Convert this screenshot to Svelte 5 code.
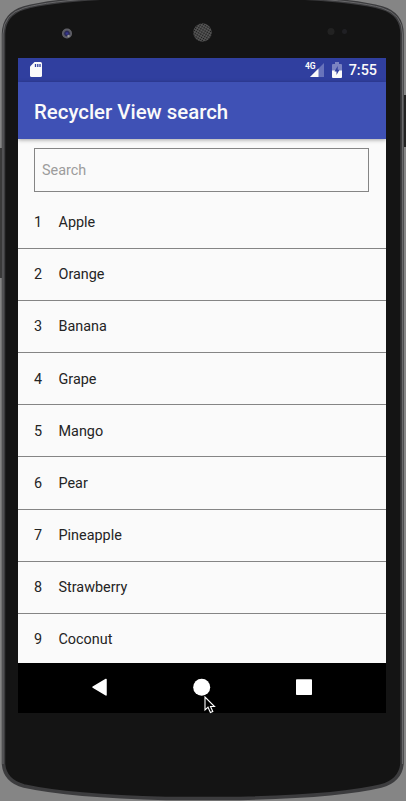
<script>
  const fruits = ['Apple', 'Orange', 'Banana', 'Grape', 'Mango', 'Pear', 'Pineapple', 'Strawberry', 'Coconut'];
</script>

<div class="device">
  <svg class="shell" viewBox="0 0 406 801" aria-hidden="true">
    <defs>
      <pattern id="grille" width="2.400" height="2.400" patternUnits="userSpaceOnUse" patternTransform="rotate(30)">
        <rect width="2.400" height="2.400" fill="#5c5c5c" />
        <circle cx="1.200" cy="1.200" r=".85" fill="#181818" />
      </pattern>
      <radialGradient id="lens">
        <stop offset="0" stop-color="#3c3ca0" />
        <stop offset=".45" stop-color="#252550" />
        <stop offset=".65" stop-color="#555560" />
        <stop offset="1" stop-color="#66666c" />
      </radialGradient>
    </defs>
    <rect width="406" height="801" fill="#858585" />
    <rect x="0" y="148" width="2" height="130" fill="#3a3a3a" />
    <rect x="404" y="95" width="2" height="52" fill="#222" />
    <path
      d="M3.500 34 Q4 14 24 8 Q48 1 105 -2 H300 Q358 1 382 8 Q402 14 402 34 V764 Q400 781 381 786 Q340 796 240 798.500 H166 Q70 796 24 786 Q5 781 3.500 764 Z"
      fill="#141414" stroke="#3c3c3e" stroke-width="3.500" />
    <path
      d="M3 34 Q3.500 14 24 8 Q48 1 105 -2 H300 Q358 1 382 8 Q402.500 14 402.500 34 V764"
      fill="none" stroke="#68686a" stroke-width="1" />
    <path d="M3 34V764" stroke="#68686a" />
    <circle cx="67" cy="33.500" r="5" fill="url(#lens)" />
    <circle cx="68.500" cy="36" r="1.200" fill="#999" />
    <circle cx="202.500" cy="32.500" r="9.300" fill="url(#grille)" />
    <circle cx="331" cy="31.500" r="3.500" fill="#222" />
    <circle cx="344.500" cy="31.500" r="2.500" fill="#202024" />
  </svg>

  <div class="screen">
    <div class="status">
      <svg class="sd" width="12" height="15" viewBox="0 0 12 15" aria-hidden="true">
        <path d="M4.500 0H10.500Q12 0 12 1.500V13.500Q12 15 10.500 15H1.500Q0 15 0 13.500V4.500Z" fill="#fafafa" />
        <path d="M5.500 2V5M7.800 2V5M10 2V5" stroke="#303f9f" stroke-width="1.300" />
      </svg>
      <span class="net">4G</span>
      <svg class="signal" width="14" height="14" viewBox="0 0 14 14" aria-hidden="true">
        <path d="M14 0V14H0Z" fill="#6873bb" />
        <path d="M8.500 5.500V14H0Z" fill="#fafafa" />
      </svg>
      <svg class="battery" width="10" height="16" viewBox="0 0 10 16" aria-hidden="true">
        <path d="M3 0H7V2H9Q10 2 10 3V9H0V3Q0 2 1 2H3Z" fill="#7b84c2" />
        <path d="M0 8.500H10V15Q10 16 9 16H1Q0 16 0 15Z" fill="#fafafa" />
        <path d="M5.700 4L2.500 9.500H4.500V13L7.500 7.700H5.700Z" fill="#303f9f" />
      </svg>
      <time>7:55</time>
    </div>
    <header><h1>Recycler View search</h1></header>
    <main>
      <input type="text" placeholder="Search" aria-label="Search" />
      <ul>
        {#each fruits as fruit, i}
          <li><span class="num">{i + 1}</span><span>{fruit}</span></li>
        {/each}
      </ul>
    </main>
    <nav>
      <svg width="368" height="50" viewBox="0 0 368 50" aria-hidden="true">
        <path d="M75 24.200L88 16.500V31.900Z" fill="#fff" stroke="#fff" stroke-width="1.500" stroke-linejoin="round" />
        <circle cx="183.700" cy="24.200" r="8.500" fill="#fff" />
        <rect x="278" y="16.200" width="16" height="15.800" rx=".8" fill="#fff" />
      </svg>
    </nav>
  </div>

  <svg class="pointer" width="12" height="18" viewBox="0 0 12 18" aria-hidden="true">
    <path d="M1 1V14L4 11.200L6.400 16.500L8.800 15.400L6.500 10.500H10.500Z" fill="#000" stroke="#fff" stroke-width="1.100" />
  </svg>
</div>

<style>
  .device {
    position: relative;
    width: 406px;
    height: 801px;
    padding: 58px 20px 0 18px;
    box-sizing: border-box;
    overflow: hidden;
    font-family: Roboto, sans-serif;
  }
  .shell {
    position: absolute;
    inset: 0;
    width: 406px;
    height: 801px;
  }
  .screen {
    position: relative;
    display: flex;
    flex-direction: column;
    width: 368px;
    height: 655px;
    background: #fafafa;
    overflow: hidden;
  }
  .status {
    flex: none;
    display: flex;
    height: 24px;
    padding: 0 9px 0 12px;
    background: #303f9f;
    color: #fafafa;
  }
  .sd {
    margin-top: 4px;
  }
  .net {
    margin: 4px 0 0 auto;
    font-size: 8.5px;
    line-height: 9px;
    font-weight: 700;
  }
  .signal {
    margin: 5px 0 0 -6px;
  }
  .battery {
    margin: 4px 0 0 8px;
  }
  time {
    margin-left: 7px;
    font-size: 14.4px;
    line-height: 25px;
    font-weight: 500;
  }
  header {
    position: relative;
    flex: none;
    display: flex;
    align-items: center;
    height: 57px;
    padding: 0 16px;
    background: #3f51b5;
    box-shadow: 0 1px 4px rgba(0, 0, 0, 0.35);
  }
  h1 {
    margin: 2px 0 0;
    font-size: 20.4px;
    line-height: 24px;
    font-weight: 500;
    color: #fafafa;
    white-space: nowrap;
  }
  main {
    flex: 1;
    min-height: 0;
    overflow: hidden;
    padding-top: 9px;
  }
  input {
    display: block;
    box-sizing: border-box;
    width: 335px;
    height: 44px;
    margin: 0 0 5px 16px;
    padding: 1px 7px 0;
    border: 1px solid #858585;
    border-radius: 0;
    background: transparent;
    font: 400 14.4px Roboto, sans-serif;
    color: #222;
    outline: none;
  }
  input::placeholder {
    color: #9c9c9c;
    opacity: 1;
  }
  ul {
    margin: 0;
    padding: 0;
    list-style: none;
  }
  li {
    display: flex;
    align-items: center;
    box-sizing: border-box;
    height: 52.1px;
    padding: 1.4px 0 0 16px;
    border-bottom: 1px solid #858585;
    font-size: 14.4px;
    line-height: 20px;
    color: #242424;
  }
  .num {
    width: 24.5px;
  }
  nav {
    flex: none;
    height: 50px;
    background: #000;
  }
  nav svg {
    display: block;
  }
  .pointer {
    position: absolute;
    left: 204px;
    top: 696px;
  }
</style>
